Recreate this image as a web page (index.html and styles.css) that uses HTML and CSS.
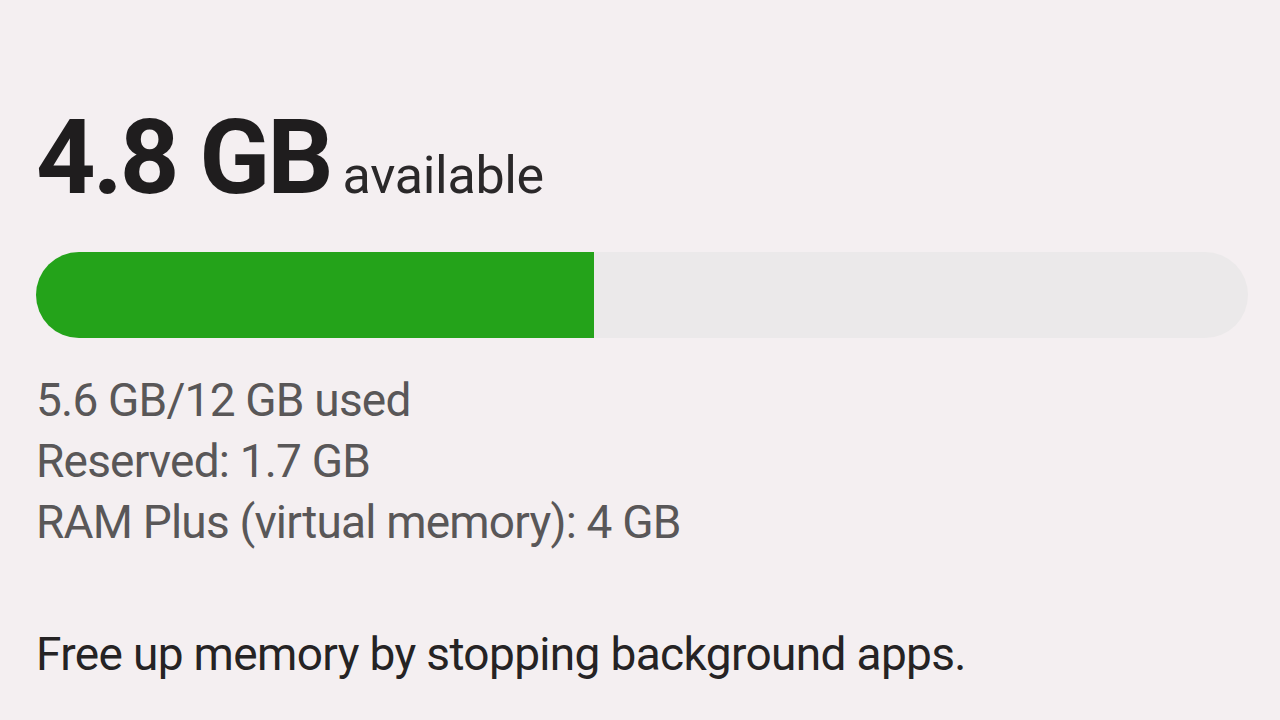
FILE: index.html
```html
<!DOCTYPE html>
<html lang="en">
<head>
<meta charset="utf-8">
<title>Memory</title>
<link rel="stylesheet" href="styles.css">
</head>
<body>
<main class="screen">
  <h1 class="headline"><span class="amount">4.8 GB</span><span class="unit">available</span></h1>
  <div class="bar"><div class="bar-fill" style="width:46%"></div></div>
  <ul class="details">
    <li>5.6 GB/12 GB used</li>
    <li>Reserved: 1.7 GB</li>
    <li>RAM Plus (virtual memory): 4 GB</li>
  </ul>
  <p class="hint">Free up memory by stopping background apps.</p>
</main>
</body>
</html>
```
FILE: styles.css
```css
html, body {
  margin: 0;
  padding: 0;
  background: #f4eff1;
}
body {
  width: 1280px;
  height: 720px;
  overflow: hidden;
  font-family: "Roboto", "Noto Sans", sans-serif;
}
.screen {
  padding: 106px 32px 0 36px;
}
.headline {
  margin: 0;
  display: flex;
  align-items: baseline;
  gap: 12px;
  line-height: 1;
  color: #1f1d1e;
}
.amount {
  font-size: 104px;
  font-weight: 700;
  letter-spacing: -3px;
}
.unit {
  font-size: 52px;
  font-weight: 400;
  letter-spacing: -0.3px;
  color: #2a2829;
}
.bar {
  margin-top: 42px;
  height: 86px;
  border-radius: 43px;
  background: #ebe9ea;
  overflow: hidden;
  display: flex;
}
.bar-fill {
  background: #24a31a;
  height: 100%;
}
.details {
  list-style: none;
  margin: 32px 0 0;
  padding: 0;
  color: #595758;
  font-size: 46px;
  line-height: 61px;
  letter-spacing: -0.8px;
}
.hint {
  margin: 71px 0 0;
  color: #252324;
  font-size: 46px;
  line-height: 61px;
  letter-spacing: -0.65px;
}
```
